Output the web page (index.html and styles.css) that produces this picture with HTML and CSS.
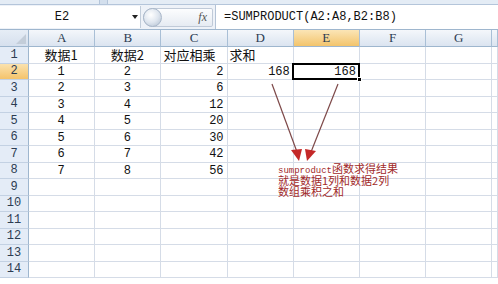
FILE: index.html
```html
<!DOCTYPE html>
<html>
<head>
<meta charset="utf-8">
<link rel="stylesheet" href="styles.css">
</head>
<body>
<div class="app">
  <div class="top"><div class="tb1"></div><div class="tb2"></div></div>
  <div class="fbar">
    <div class="namebox"><span class="ref">E2</span><span class="dd"></span></div>
    <div class="fxbtn"><span class="knob"></span><span class="fx">fx</span></div>
    <div class="formula">=SUMPRODUCT(A2:A8,B2:B8)</div>
  </div>
  <div class="sheet">
    <div class="corner"></div><div class="h">A</div><div class="h">B</div><div class="h">C</div><div class="h">D</div><div class="h on">E</div><div class="h">F</div><div class="h">G</div><div class="h"></div>

    <div class="r">1</div><div class="c m up">数据1</div><div class="c m up">数据2</div><div class="c up">对应相乘</div><div class="c up">求和</div><div class="c"></div><div class="c"></div><div class="c"></div><div class="c"></div>
    <div class="r on">2</div><div class="c m n">1</div><div class="c m n">2</div><div class="c rt n">2</div><div class="c rt n">168</div><div class="c rt n sel">168<span class="handle"></span></div><div class="c"></div><div class="c"></div><div class="c"></div>
    <div class="r">3</div><div class="c m n">2</div><div class="c m n">3</div><div class="c rt n">6</div><div class="c"></div><div class="c"></div><div class="c"></div><div class="c"></div><div class="c"></div>
    <div class="r">4</div><div class="c m n">3</div><div class="c m n">4</div><div class="c rt n">12</div><div class="c"></div><div class="c"></div><div class="c"></div><div class="c"></div><div class="c"></div>
    <div class="r">5</div><div class="c m n">4</div><div class="c m n">5</div><div class="c rt n">20</div><div class="c"></div><div class="c"></div><div class="c"></div><div class="c"></div><div class="c"></div>
    <div class="r">6</div><div class="c m n">5</div><div class="c m n">6</div><div class="c rt n">30</div><div class="c"></div><div class="c"></div><div class="c"></div><div class="c"></div><div class="c"></div>
    <div class="r">7</div><div class="c m n">6</div><div class="c m n">7</div><div class="c rt n">42</div><div class="c"></div><div class="c"></div><div class="c"></div><div class="c"></div><div class="c"></div>
    <div class="r">8</div><div class="c m n">7</div><div class="c m n">8</div><div class="c rt n">56</div><div class="c"></div><div class="c"></div><div class="c"></div><div class="c"></div><div class="c"></div>
    <div class="r">9</div><div class="c"></div><div class="c"></div><div class="c"></div><div class="c"></div><div class="c"></div><div class="c"></div><div class="c"></div><div class="c"></div>
    <div class="r">10</div><div class="c"></div><div class="c"></div><div class="c"></div><div class="c"></div><div class="c"></div><div class="c"></div><div class="c"></div><div class="c"></div>
    <div class="r">11</div><div class="c"></div><div class="c"></div><div class="c"></div><div class="c"></div><div class="c"></div><div class="c"></div><div class="c"></div><div class="c"></div>
    <div class="r">12</div><div class="c"></div><div class="c"></div><div class="c"></div><div class="c"></div><div class="c"></div><div class="c"></div><div class="c"></div><div class="c"></div>
    <div class="r">13</div><div class="c"></div><div class="c"></div><div class="c"></div><div class="c"></div><div class="c"></div><div class="c"></div><div class="c"></div><div class="c"></div>
    <div class="r">14</div><div class="c"></div><div class="c"></div><div class="c"></div><div class="c"></div><div class="c"></div><div class="c"></div><div class="c"></div><div class="c"></div>
  </div>

  <svg class="arrows" width="498" height="284" viewBox="0 0 498 284">
    <line x1="272" y1="84" x2="297" y2="152" stroke="#7d4848" stroke-width="1.2"/>
    <polygon points="291,150 302,149 299,161" fill="#c42828"/>
    <line x1="338" y1="84" x2="311" y2="152" stroke="#7d4848" stroke-width="1.2"/>
    <polygon points="305,149 316,151 307,161" fill="#c42828"/>
  </svg>

  <div class="note">
    <div class="ln"><span class="en">sumproduct</span>函数求得结果</div>
    <div class="ln">就是数据1列和数据2列</div>
    <div class="ln">数组乘积之和</div>
  </div>
</div>
</body>
</html>
```

FILE: styles.css
```css
* { box-sizing: border-box; }
html, body { margin: 0; padding: 0; background: #fff; }
.app {
  position: relative;
  width: 498px;
  height: 284px;
  overflow: hidden;
  background: #fff;
  font-family: "Noto Sans CJK SC", sans-serif;
}
.top {
  height: 5px;
  display: flex;
  gap: 7px;
  background: #d3dfed;
  border-bottom: 1px solid #b4c5da;
}
.tb1 { width: 100px; background: #e4ecf5; border-right: 1px solid #b4c5da; }
.tb2 { flex: 1; background: #e4ecf5; border-left: 1px solid #b4c5da; }
.fbar {
  height: 24px;
  display: flex;
  align-items: center;
  background: #eef2f8;
}
.namebox {
  width: 141px;
  height: 22px;
  display: flex;
  align-items: center;
  background: #fff;
  border-right: 1px solid #c2cdda;
}
.ref {
  width: 124px;
  text-align: center;
  font-family: "Liberation Mono", monospace;
  font-size: 12px;
  color: #111;
}
.dd {
  margin-left: 8px;
  width: 0;
  height: 0;
  border-left: 3px solid transparent;
  border-right: 3px solid transparent;
  border-top: 4px solid #222;
}
.fxbtn {
  position: relative;
  margin-left: 2px;
  width: 70px;
  height: 19px;
  border: 1px solid #c0cad8;
  border-radius: 10px 2px 2px 10px;
  background: linear-gradient(#fcfdfe, #e6ebf2);
  display: flex;
  align-items: center;
  justify-content: flex-end;
  padding-right: 5px;
}
.knob {
  position: absolute;
  left: -1px;
  top: -1px;
  width: 19px;
  height: 19px;
  border-radius: 50%;
  border: 1px solid #a9b7c9;
  background: radial-gradient(circle at 40% 35%, #ffffff 0%, #dfe6ef 50%, #aebccd 100%);
}
.fx {
  font-family: "Liberation Serif", serif;
  font-style: italic;
  font-size: 12px;
  color: #555;
}
.formula {
  flex: 1;
  height: 24px;
  margin-left: 2px;
  background: #fff;
  border-left: 1px solid #b4c3d6;
  display: flex;
  align-items: center;
  padding-left: 8px;
  font-family: "Liberation Mono", monospace;
  font-size: 12px;
  color: #111;
}
.sheet {
  display: grid;
  grid-template-columns: 29px repeat(7, 66.2px) 1fr;
  grid-template-rows: 17px repeat(14, 16.5px);
  border-top: 1px solid #9eb6ce;
}
.corner {
  position: relative;
  background: linear-gradient(#e6edf6, #d6e0ee);
  border-right: 1px solid #9eb6ce;
  border-bottom: 1px solid #9eb6ce;
}
.corner::after {
  content: "";
  position: absolute;
  right: 2px;
  bottom: 2px;
  width: 0;
  height: 0;
  border-left: 10px solid transparent;
  border-bottom: 10px solid #c3cdd9;
}
.h {
  display: flex;
  align-items: center;
  justify-content: center;
  background: linear-gradient(#f4f7fb, #dbe4f0);
  border-right: 1px solid #a9bfd6;
  border-bottom: 1px solid #9eb6ce;
  font-family: "Liberation Serif", serif;
  font-size: 13px;
  color: #2c3c52;
}
.h.on { background: linear-gradient(#fbe5b6, #f3c46c); }
.r {
  display: flex;
  align-items: center;
  justify-content: center;
  background: #e4ecf7;
  border-right: 1px solid #9eb6ce;
  border-bottom: 1px solid #c3d1e3;
  font-family: "Liberation Mono", monospace;
  font-size: 12px;
  color: #2c3c52;
}
.r.on { background: linear-gradient(#fbe2ae, #f4c36b); }
.c {
  display: flex;
  align-items: center;
  padding: 1px 3px 0 2px;
  border-right: 1px solid #d5dce7;
  border-bottom: 1px solid #d5dce7;
  font-size: 13px;
  line-height: 1;
  color: #111;
  white-space: nowrap;
}
.c.up { padding-top: 0; padding-bottom: 1px; }
.c.n {
  font-family: "Liberation Mono", monospace;
  font-size: 12px;
}
.c.m { justify-content: center; }
.c.rt { justify-content: flex-end; }
.sel { position: relative; }
.sel::after {
  content: "";
  position: absolute;
  left: -2px;
  top: -1px;
  right: -1px;
  bottom: -1px;
  border: 2px solid #000;
}
.handle {
  position: absolute;
  right: -3px;
  bottom: -3px;
  width: 5px;
  height: 5px;
  background: #000;
  border: 1px solid #fff;
  z-index: 2;
}
.arrows { position: absolute; left: 0; top: 0; pointer-events: none; }
.note {
  position: absolute;
  left: 278px;
  top: 163px;
  font-size: 11px;
  line-height: 11.5px;
  color: #a12a2a;
}
.note .ln { height: 11.5px; }
.note .en {
  font-family: "Liberation Mono", monospace;
  font-size: 9px;
}
```
